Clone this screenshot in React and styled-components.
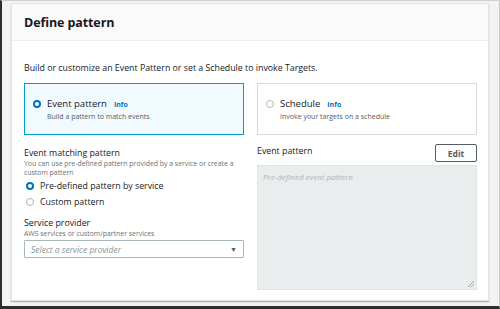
import React from 'react'
import styled, { createGlobalStyle } from 'styled-components'

const GlobalStyle = createGlobalStyle`
  html, body {
    margin: 0;
    padding: 0;
    background: #ffffff;
  }
  * {
    box-sizing: border-box;
  }
`

const Frame = styled.div`
  width: 500px;
  height: 309px;
  background: #f2f3f3;
  border-left: 2px solid #2e2e2e;
  border-bottom: 3px solid #2e2e2e;
  border-top: 1px solid #d0d0d0;
  border-right: 1px solid #c8c8c8;
  padding: 2px 9px 0 9px;
  font-family: 'Open Sans', 'Liberation Sans', sans-serif;
  color: #16191f;
  overflow: hidden;
`

const Panel = styled.div`
  width: 478px;
  height: 298px;
  background: #ffffff;
  border: 1px solid #e3e6e6;
  box-shadow: 0 1px 1px 0 rgba(0, 28, 36, 0.3);
  display: flex;
  flex-direction: column;
`

const Header = styled.div`
  height: 37px;
  background: #fafafa;
  border-bottom: 1px solid #eaeded;
  display: flex;
  align-items: center;
  padding: 0 12px;
  font-size: 12.5px;
  font-weight: 700;
  letter-spacing: -0.1px;
`

const Body = styled.div`
  padding: 21px 11px 0 12px;
  display: flex;
  flex-direction: column;
`

const Lead = styled.p`
  margin: 0 0 9px;
  font-size: 8.8px;
  line-height: 12px;
`

const Tiles = styled.div`
  display: grid;
  grid-template-columns: 220px 220px;
  column-gap: 13px;
`

const Tile = styled.div`
  height: 52px;
  border: 1px solid ${(p) => (p.$active ? '#00a1c9' : '#d5dbdb')};
  background: ${(p) => (p.$active ? '#f1faff' : '#ffffff')};
  display: flex;
  align-items: flex-start;
  padding: 14px 8px 0 8px;
  gap: 6px;
`

const Radio = styled.span`
  flex: none;
  width: 8px;
  height: 8px;
  margin-top: 2px;
  border-radius: 50%;
  background: #ffffff;
  border: ${(p) => (p.$checked ? '2.5px solid #0073bb' : '1px solid #aab7b8')};
`

const TileText = styled.div`
  display: flex;
  flex-direction: column;
`

const TileTitle = styled.div`
  display: flex;
  align-items: baseline;
  gap: 7px;
  font-size: 9.5px;
  line-height: 12px;
`

const Info = styled.span`
  color: #0073bb;
  font-size: 7px;
  font-weight: 700;
`

const TileHint = styled.div`
  font-size: 7px;
  line-height: 11px;
  color: #545b64;
`

const Columns = styled.div`
  display: grid;
  grid-template-columns: 220px 220px;
  column-gap: 13px;
  margin-top: 12px;
`

const Column = styled.div`
  display: flex;
  flex-direction: column;
`

const Label = styled.div`
  font-size: 8.8px;
  line-height: 12px;
`

const Hint = styled.div`
  font-size: 6.9px;
  line-height: 9px;
  color: #687078;
`

const Options = styled.div`
  display: flex;
  flex-direction: column;
  gap: 4px;
  margin-top: 3px;
`

const Option = styled.label`
  display: flex;
  align-items: center;
  gap: 6px;
  font-size: 8.8px;
  line-height: 12px;
  padding-left: 2px;

  ${Radio} {
    margin-top: 0;
  }
`

const Field = styled.div`
  display: flex;
  flex-direction: column;
  margin-top: ${(p) => p.$top || 0}px;
`

const Select = styled.div`
  margin-top: 2px;
  height: 18px;
  border: 1px solid #aab7b8;
  border-radius: 1px;
  display: flex;
  align-items: center;
  justify-content: space-between;
  padding: 0 6px 0 6px;
  font-size: 8.5px;
  font-style: italic;
  color: #879596;
`

const Caret = styled.span`
  font-style: normal;
  font-size: 7px;
  color: #545b64;
`

const EditorHead = styled.div`
  display: flex;
  justify-content: space-between;
  align-items: flex-start;
  margin-top: -3px;
`

const EditorLabel = styled(Label)`
  margin-top: 1px;
`

const Button = styled.button`
  width: 42px;
  height: 18px;
  background: #ffffff;
  border: 1px solid #545b64;
  border-radius: 2px;
  font-family: inherit;
  font-size: 8.5px;
  font-weight: 700;
  color: #545b64;
  padding: 0;
`

const Editor = styled.div`
  position: relative;
  margin-top: 3px;
  height: 125px;
  background: #eaeded;
  border: 1px solid #e1e4e4;
  padding: 5px 5px;
  font-size: 8px;
  font-style: italic;
  color: #aab7b8;
`

const Grip = styled.svg`
  position: absolute;
  right: 2px;
  bottom: 2px;
`

const App = () => (
  <>
    <GlobalStyle />
    <Frame>
      <Panel>
        <Header>Define pattern</Header>
        <Body>
          <Lead>Build or customize an Event Pattern or set a Schedule to invoke Targets.</Lead>
          <Tiles>
            <Tile $active>
              <Radio $checked />
              <TileText>
                <TileTitle>
                  Event pattern <Info>Info</Info>
                </TileTitle>
                <TileHint>Build a pattern to match events</TileHint>
              </TileText>
            </Tile>
            <Tile>
              <Radio />
              <TileText>
                <TileTitle>
                  Schedule <Info>Info</Info>
                </TileTitle>
                <TileHint>Invoke your targets on a schedule</TileHint>
              </TileText>
            </Tile>
          </Tiles>
          <Columns>
            <Column>
              <Label>Event matching pattern</Label>
              <Hint>
                You can use pre-defined pattern provided by a service or create a custom pattern
              </Hint>
              <Options>
                <Option>
                  <Radio $checked />
                  Pre-defined pattern by service
                </Option>
                <Option>
                  <Radio />
                  Custom pattern
                </Option>
              </Options>
              <Field $top={9}>
                <Label>Service provider</Label>
                <Hint>AWS services or custom/partner services</Hint>
                <Select>
                  Select a service provider
                  <Caret>▼</Caret>
                </Select>
              </Field>
            </Column>
            <Column>
              <EditorHead>
                <EditorLabel>Event pattern</EditorLabel>
                <Button>Edit</Button>
              </EditorHead>
              <Editor>
                Pre-defined event pattern
                <Grip width="6" height="6" viewBox="0 0 6 6">
                  <path d="M6 0 L0 6 M6 3 L3 6" stroke="#879596" strokeWidth="0.8" />
                </Grip>
              </Editor>
            </Column>
          </Columns>
        </Body>
      </Panel>
    </Frame>
  </>
)

export default App
